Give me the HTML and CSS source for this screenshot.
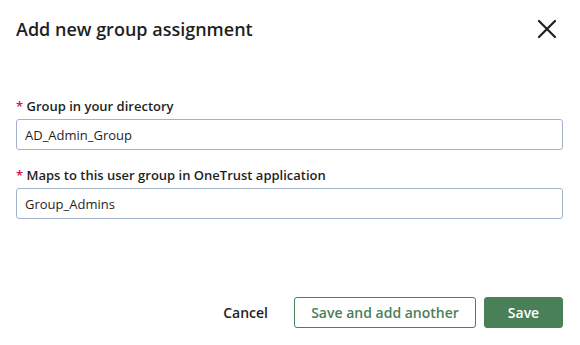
FILE: index.html
```html
<!DOCTYPE html>
<html lang="en">
  <head>
    <title>Add new group assignment</title>
    <link rel="stylesheet" href="styles.css">
  </head>
  <body>
  <div class="modal">
    <div class="modal-header">
      <h2>Add new group assignment</h2>
      <button class="close-btn" aria-label="Close">
        <svg width="20" height="20" viewBox="0 0 20 20">
          <path d="M2 2 L18 18 M18 2 L2 18" stroke="#1f1f1f" stroke-width="2.2" stroke-linecap="round"/>
        </svg>
      </button>
    </div>

    <div class="modal-body">
      <div class="field">
        <label><span class="req">*</span> Group in your directory</label>
        <input type="text" value="AD_Admin_Group">
      </div>
      <div class="field">
        <label><span class="req">*</span> Maps to this user group in OneTrust application</label>
        <input type="text" value="Group_Admins">
      </div>
    </div>

    <div class="modal-footer">
      <button class="btn btn-link">Cancel</button>
      <button class="btn btn-outline">Save and add another</button>
      <button class="btn btn-primary">Save</button>
    </div>
  </div>
  </body>
</html>
```

FILE: styles.css
```css
:root {
  --green: #4a8058;
  --text: #1f1f1f;
  --border: #a3b3cc;
}

* {
  margin: 0;
  padding: 0;
  box-sizing: border-box;
  font-family: 'Open Sans', sans-serif;
}

body {
  background: #ffffff;
  color: var(--text);
}

.modal {
  width: 580px;
  height: 345px;
  display: flex;
  flex-direction: column;
  padding: 0 17px 0 16px;
}

.modal-header {
  display: flex;
  align-items: center;
  justify-content: space-between;
  height: 58px;
}

.modal-header h2 {
  font-size: 18px;
  font-weight: 600;
  color: var(--text);
}

.close-btn {
  background: none;
  border: none;
  width: 20px;
  height: 20px;
  margin-right: 6px;
  cursor: pointer;
}

.modal-body {
  padding-top: 39px;
}

.field {
  margin-bottom: 16px;
}

.field label {
  display: block;
  font-size: 13px;
  font-weight: 600;
  margin-bottom: 4px;
}

.req {
  color: #d0154f;
}

.field input {
  width: 100%;
  height: 31px;
  border: 1px solid var(--border);
  border-radius: 3px;
  padding: 0 8px;
  font-size: 13px;
  color: var(--text);
  outline: none;
}

.modal-footer {
  margin-top: auto;
  margin-bottom: 17px;
  display: flex;
  justify-content: flex-end;
  align-items: center;
  gap: 8px;
}

.btn {
  height: 31px;
  font-size: 14px;
  font-weight: 600;
  border-radius: 3px;
  cursor: pointer;
}

.btn-link {
  background: none;
  border: none;
  color: var(--text);
  padding: 0 16px;
  margin-right: 2px;
}

.btn-outline {
  background: #ffffff;
  border: 1px solid var(--green);
  color: var(--green);
  width: 182px;
}

.btn-primary {
  background: var(--green);
  border: 1px solid var(--green);
  color: #ffffff;
  width: 79px;
}
```
